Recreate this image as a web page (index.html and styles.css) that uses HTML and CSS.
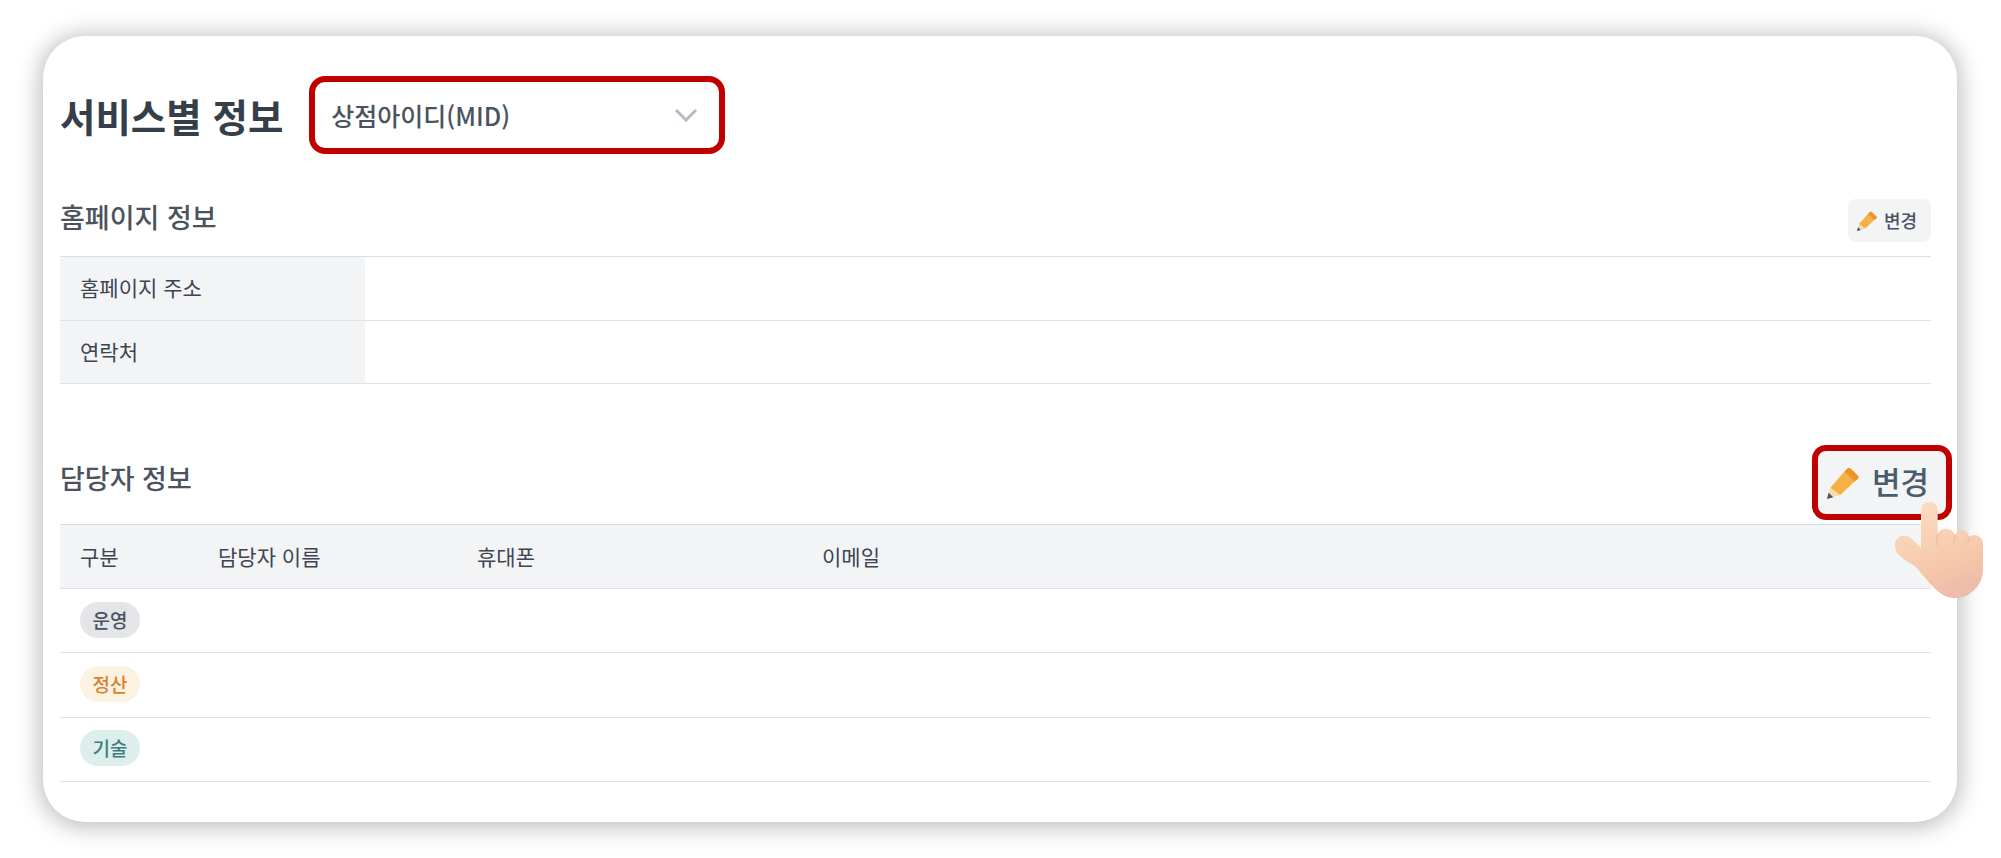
FILE: index.html
```html
<!DOCTYPE html>
<html lang="ko">
<head>
<meta charset="utf-8">
<title>서비스별 정보</title>
<link rel="stylesheet" href="styles.css">
</head>
<body>
<svg class="defs" width="0" height="0" aria-hidden="true">
  <symbol id="pencil" viewBox="0 0 32 32">
    <path d="M0 32l3.3-11.3 10 7.3z" fill="#f8dcae"/>
    <path d="M0 32l1.6-6.2 4.6 4.4z" fill="#4a5462"/>
    <path d="M3.3 20.7L17.3 4.7l10 10L13.3 28z" fill="#f5b244"/>
    <path d="M17.3 4.7l3-3.2a2.4 2.4 0 0 1 3.4 0l7.2 7a2.4 2.4 0 0 1 0 3.4l-3.6 2.8z" fill="#ee9326"/>
  </symbol>
</svg>
<main class="card">
  <header class="page-head">
    <h1 class="page-title">서비스별 정보</h1>
    <div class="select">
      <span class="select-value">상점아이디(MID)</span>
      <svg class="chevron" viewBox="0 0 24 14" aria-hidden="true"><path d="M2 2l10 10L22 2" fill="none" stroke="#b4bac4" stroke-width="3"/></svg>
    </div>
  </header>

  <section class="section first">
    <div class="section-head">
      <h2 class="section-title raised">홈페이지 정보</h2>
      <button class="edit"><svg class="edit-icon"><use href="#pencil"/></svg><span class="edit-label">변경</span></button>
    </div>
    <table class="table info">
      <tr><th>홈페이지 주소</th><td></td></tr>
      <tr><th>연락처</th><td></td></tr>
    </table>
  </section>

  <section class="section second">
    <div class="section-head wide">
      <h2 class="section-title">담당자 정보</h2>
    </div>
    <button class="edit-large"><svg class="edit-large-icon"><use href="#pencil"/></svg><span class="edit-large-label">변경</span></button>
    <table class="table contacts">
      <thead>
        <tr><th class="c1">구분</th><th class="c2">담당자 이름</th><th class="c3">휴대폰</th><th>이메일</th></tr>
      </thead>
      <tbody>
        <tr><td><span class="badge ops">운영</span></td><td></td><td></td><td></td></tr>
        <tr><td><span class="badge pay">정산</span></td><td></td><td></td><td></td></tr>
        <tr><td><span class="badge tech">기술</span></td><td></td><td></td><td></td></tr>
      </tbody>
    </table>
    <svg class="hand" viewBox="0 0 88 97" aria-hidden="true">
      <defs>
        <linearGradient id="skin" x1="0.1" y1="0" x2="0.45" y2="1">
          <stop offset="0" stop-color="#fbdfc8"/>
          <stop offset="0.72" stop-color="#f6c8a9"/>
          <stop offset="1" stop-color="#eebcab"/>
        </linearGradient>
      </defs>
      <path d="M26 8a8.300 8.300 0 0 1 16.700 0V32C44 28 49 26 52 27C56 27 59 30 60 33C62 29 65 28 67 28C71 28 73 31 74 35C76 33 79 33 82 33.500C86 35 88 38 88 42V66C88 74 86 80 82 85C76 92 69 96 61 96C54 96 49 94 45 91C40 87 36 83 32 78L20 64C13 60 6 56 2 51C-1 46 -1 39 3 36C7 32 13 33 17 37L26 46Z" fill="url(#skin)"/>
      <path d="M42.700 32c-1 4-1 8 0 11M60 33c0 3-.5 6-1.500 8M74 35c0 3-.5 5-1.500 7" fill="none" stroke="#efbfa1" stroke-width="1.400" stroke-linecap="round"/>
    </svg>
  </section>
</main>
</body>
</html>
```

FILE: styles.css
```css
* {
  box-sizing: border-box;
}

html,
body {
  margin: 0;
  height: 858px;
  overflow: hidden;
  background: #fff;
}

body {
  padding: 36px 44px 36px 43px;
  font-family: "Noto Sans CJK KR", "Noto Sans", sans-serif;
  color: #3d4551;
}

.defs {
  position: absolute;
}

.card {
  height: 786px;
  padding: 40px 26px 0 17px;
  background: #fff;
  border-radius: 42px;
  box-shadow: 0 2px 22px 4px rgba(0, 0, 0, 0.25);
}

.page-head {
  display: flex;
  align-items: center;
  gap: 26px;
}

.page-title {
  margin: 0;
  font-size: 38.5px;
  line-height: 50px;
  font-weight: 700;
  color: #363e4a;
  white-space: nowrap;
}

.select {
  display: flex;
  align-items: center;
  justify-content: space-between;
  width: 416px;
  height: 78px;
  padding: 0 21px 0 16px;
  border: 6px solid #c00000;
  border-radius: 16px;
}

.select-value {
  font-size: 25px;
  font-weight: 500;
  color: #4b5360;
}

.chevron {
  width: 24px;
  height: 14px;
}

.section {
  position: relative;
}

.first {
  margin-top: 45px;
}

.second {
  margin-top: 73px;
}

.section-head {
  display: flex;
  align-items: center;
  justify-content: space-between;
  height: 43px;
  margin-bottom: 14px;
}

.section-head.wide {
  margin-bottom: 24px;
}

.section-title {
  margin: 0;
  padding-bottom: 2px;
  font-size: 27px;
  font-weight: 500;
  color: #4b5360;
}

.section-title.raised {
  padding-bottom: 8px;
}

.edit {
  display: flex;
  align-items: center;
  gap: 7px;
  width: 83px;
  height: 43px;
  padding: 0 0 0 9px;
  border: 0;
  border-radius: 8px;
  background: #f3f4f6;
  font: 500 18px "Noto Sans CJK KR", sans-serif;
  color: #4b5360;
}

.edit-label {
  padding-bottom: 2px;
}

.edit-icon {
  width: 20px;
  height: 20px;
}

.edit-large {
  position: absolute;
  top: -12px;
  right: -21px;
  display: flex;
  align-items: center;
  gap: 13px;
  width: 140px;
  height: 75px;
  padding: 0 0 0 9px;
  border: 6px solid #c00000;
  border-radius: 14px;
  background: #f3f4f6;
  font: 500 31px "Noto Sans CJK KR", sans-serif;
  color: #4b5b6c;
  z-index: 1;
}

.edit-large-label {
  padding-bottom: 5px;
}

.edit-large-icon {
  width: 32px;
  height: 32px;
}

.table {
  width: 100%;
  border-collapse: collapse;
  table-layout: fixed;
  border-top: 1px solid #d9dde6;
  font-size: 21px;
}

.table th {
  font-weight: 400;
  text-align: left;
  padding: 0 0 2px 20px;
}

.table tr {
  border-bottom: 1px solid #e0e2e8;
}

.info th {
  width: 305px;
  height: 63.5px;
  background: #f3f4f6;
}

.contacts thead th {
  height: 64px;
  background: #f3f4f6;
}

.contacts tbody td {
  height: 64.3px;
  padding: 0 0 2px 20px;
  vertical-align: middle;
}

.c1 {
  width: 138px;
}

.c2 {
  width: 259px;
}

.c3 {
  width: 345px;
}

.badge {
  display: block;
  width: 60px;
  height: 36px;
  border-radius: 18px;
  text-align: center;
  font-size: 19px;
  font-weight: 500;
  line-height: 35px;
}

.ops {
  background: #e3e5e9;
  color: #4b5360;
}

.pay {
  background: #fdf2e1;
  color: #d5852f;
}

.tech {
  background: #ddeeed;
  color: #3c7f7d;
}

.hand {
  position: absolute;
  top: 45px;
  right: -52px;
  width: 88px;
  height: 97px;
  z-index: 2;
}
```
